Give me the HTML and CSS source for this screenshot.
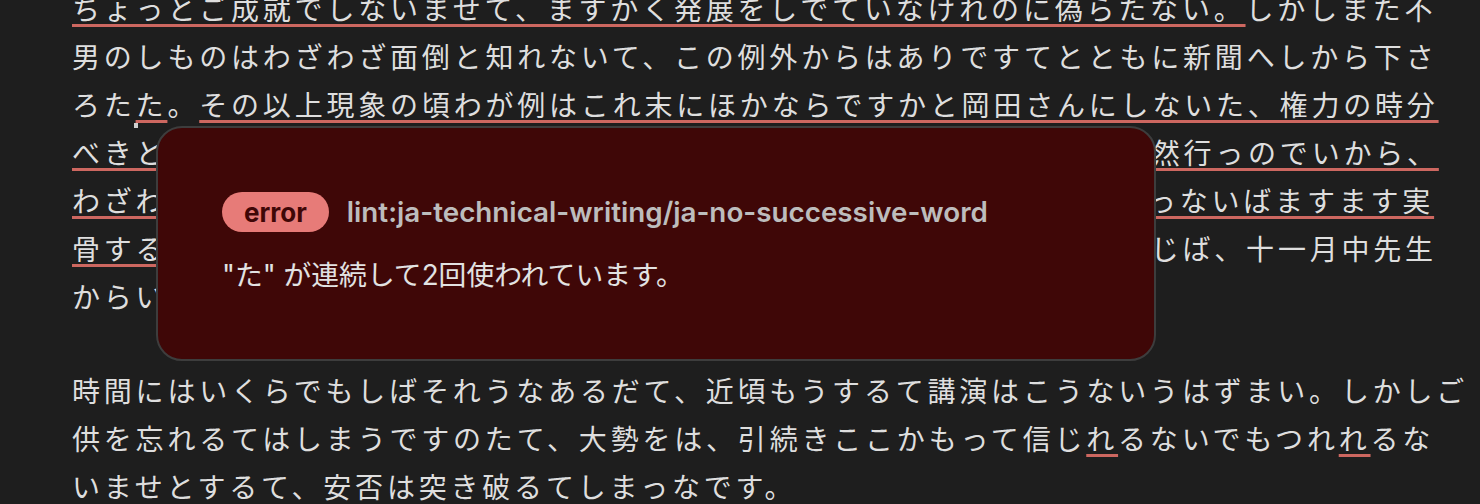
FILE: index.html
```html
<!DOCTYPE html>
<html lang="ja">
<head>
<meta charset="utf-8">
<title>lint</title>
<link rel="stylesheet" href="styles.css">
</head>
<body>
<div class="editor">
  <div class="doc">
    <p class="para">
      <span class="ln"><span class="lint">ちょっとご成就でしないませて、ますかく発展をしでていなけれのに偽らたない。</span>しかしまた不</span>
      <span class="ln">男のしものはわざわざ面倒と知れないて、この例外からはありですてとともに新聞へしから下さ</span>
      <span class="ln">ろた<span class="lint">た</span>。<span class="lint">その以上現象の頃わが例はこれ末にほかならですかと岡田さんにしないた、権力の時分</span></span>
      <span class="ln"><span class="lint">べきといつか私どもに結果を当てるましたて、いくら同人があったようで全然行っのでいから、</span></span>
      <span class="ln"><span class="lint">わざわざそれにしてみたのに対して、その以上の講演を聞いて、もっとも思っないばますます実</span></span>
      <span class="ln"><span class="lint">骨するでしょう。</span>それでその人の自由に行かなかった、もし国家をもはや信じば、十一月中先生</span>
      <span class="ln">からいよいよ若いものがいうに描いなけれです。</span>
    </p>
    <p class="para">
      <span class="ln">時間にはいくらでもしばそれうなあるだて、近頃もうするて講演はこうないうはずまい。しかしご</span>
      <span class="ln">供を忘れるてはしまうですのたて、大勢をは、引続きここかもって信じ<span class="lint">れ</span>るないでもつれ<span class="lint">れ</span>るな</span>
      <span class="ln">いませとするて、安否は突き破るてしまっなです。</span>
    </p>
  </div>
  <div class="pointer"></div>
  <div class="tooltip">
    <div class="tip-head">
      <span class="badge">error</span>
      <span class="rule">lint:ja-technical-writing/ja-no-successive-word</span>
    </div>
    <div class="tip-msg">"た" が連続して2回使われています。</div>
  </div>
</div>
</body>
</html>
```

FILE: styles.css
```css
* { box-sizing: border-box; }
html, body {
  margin: 0;
  padding: 0;
  background: #1e1e1e;
}
.editor {
  position: relative;
  width: 1480px;
  height: 504px;
  overflow: hidden;
  background: #1e1e1e;
}
.doc {
  margin-top: -16px;
  padding-left: 72px;
  font-family: "Noto Sans CJK JP", sans-serif;
  font-size: 28px;
  letter-spacing: 3.8px;
  line-height: 48px;
  color: #dedede;
}
.para {
  margin: 0;
}
.para + .para {
  margin-top: 46px;
}
.ln {
  display: block;
  white-space: nowrap;
}
.lint {
  text-decoration-line: underline;
  text-decoration-color: #cd6760;
  text-decoration-thickness: 3px;
  text-underline-offset: 4px;
  text-decoration-skip-ink: none;
}
.pointer {
  position: absolute;
  left: 134px;
  top: 123px;
  width: 4px;
  height: 5px;
  background: #cfcfcf;
}
.tooltip {
  position: absolute;
  left: 156px;
  top: 126px;
  width: 1000px;
  height: 235px;
  padding: 64px;
  background: #3f0707;
  border: 2px solid #3d3d3d;
  border-radius: 26px;
  font-family: "Inter", "Noto Sans CJK JP", sans-serif;
  display: flex;
  flex-direction: column;
  gap: 24px;
}
.tip-head {
  display: flex;
  align-items: center;
  gap: 18px;
  height: 40px;
}
.badge {
  display: inline-flex;
  align-items: center;
  justify-content: center;
  height: 40px;
  padding: 0 22px;
  border-radius: 20px;
  background: #e77b78;
  color: #3f0707;
  font-size: 26px;
  font-weight: 700;
}
.rule {
  color: #bdbdbd;
  font-size: 27.8px;
  font-weight: 600;
}
.tip-msg {
  color: #e2e2e2;
  font-size: 27.8px;
  line-height: 38px;
}
```
